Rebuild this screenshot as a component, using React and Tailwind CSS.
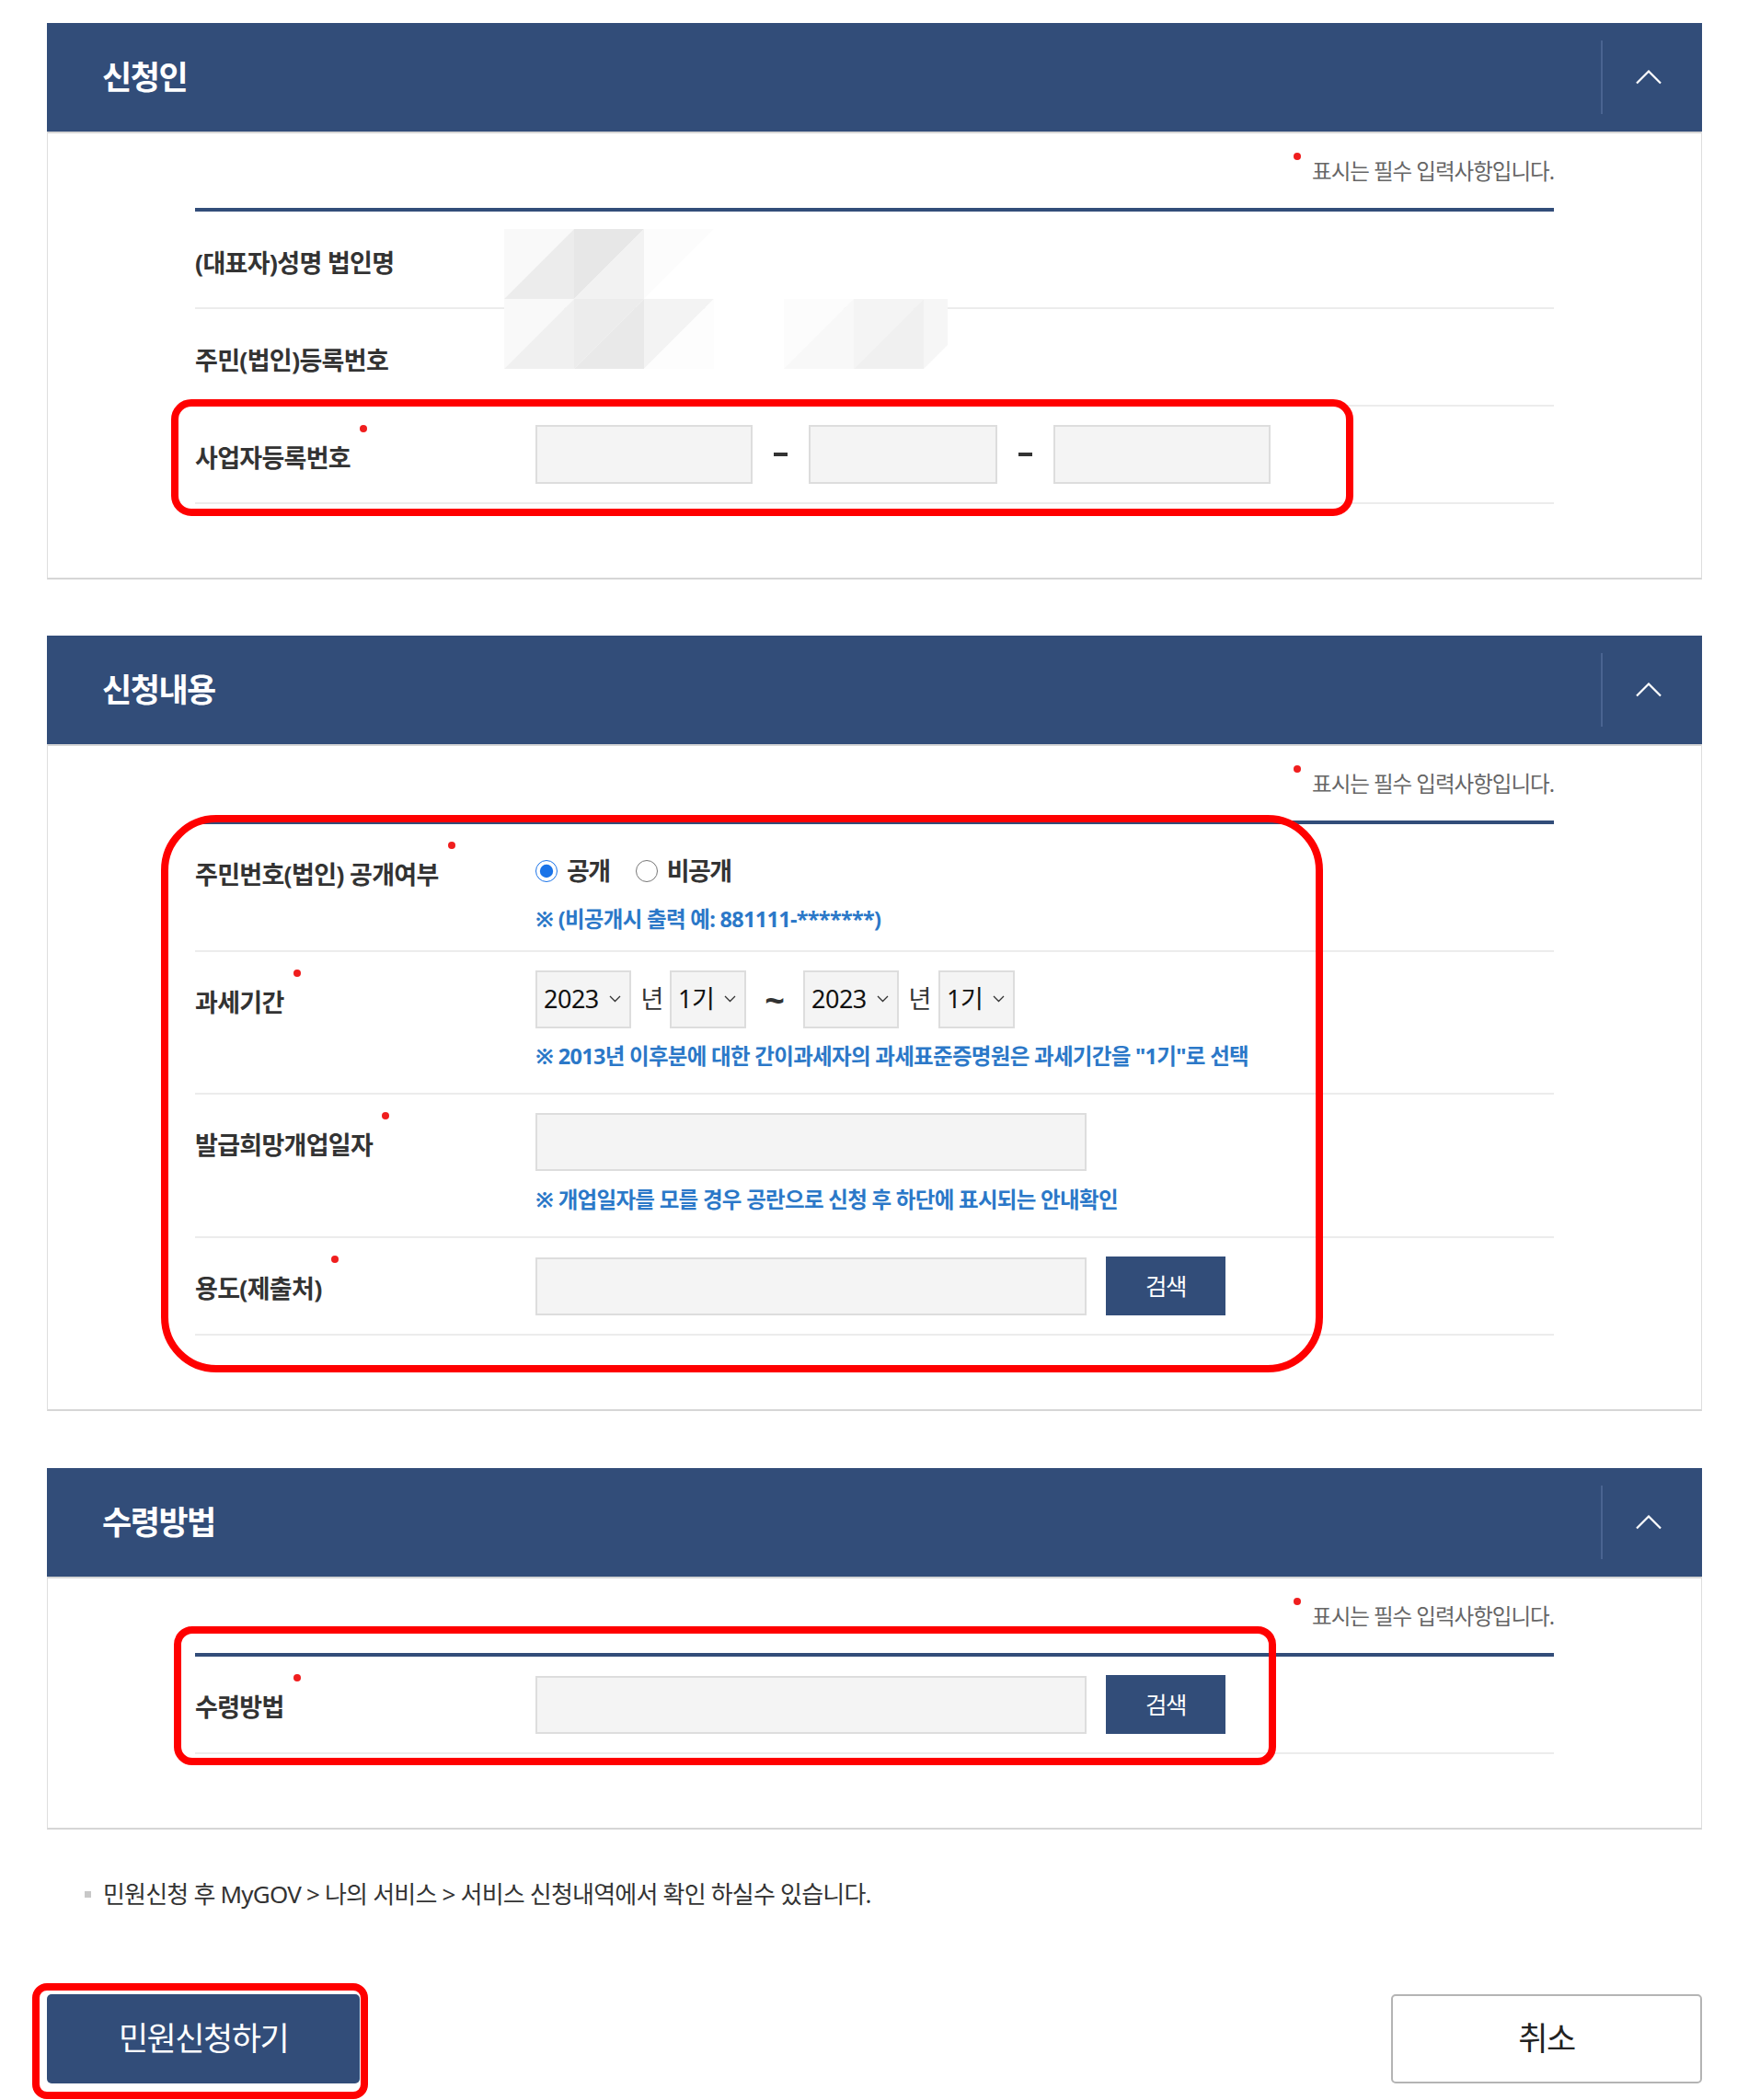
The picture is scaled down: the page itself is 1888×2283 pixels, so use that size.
import React from 'react'

const Dot = ({ className = '' }) => (
  <span className={`absolute h-[8px] w-[8px] rounded-full bg-[#f01e1e] ${className}`} />
)

const Header = ({ title }) => (
  <div className="flex h-[118px] items-center justify-between bg-[#324d79]">
    <h2 className="pl-[60px] text-[35px] font-bold tracking-[-1.5px] text-white">{title}</h2>
    <div className="flex h-full items-center">
      <div className="h-[80px] w-[2px] bg-[#4a6491]" />
      <div className="flex w-[108px] justify-center pr-[8px]">
        <svg width="28" height="16" viewBox="0 0 28 16">
          <polyline points="1,14.5 14,1.5 27,14.5" fill="none" stroke="white" strokeWidth="2.2" />
        </svg>
      </div>
    </div>
  </div>
)

const RequiredNote = () => (
  <div className="flex h-[81px] items-center justify-end">
    <span className="relative inline-block text-[23.5px] leading-[30px] tracking-[-1px] text-[#666]">
      <Dot className="left-[-20px] top-[-5px]" />
      표시는 필수 입력사항입니다.
    </span>
  </div>
)

const Section = ({ title, className = '', children }) => (
  <section className={className}>
    <Header title={title} />
    <div className="border-x border-t-2 border-b-2 border-x-[#dedede] border-t-[#d6d6d6] border-b-[#d6d6d6] px-[160px] pb-[80px]">
      <RequiredNote />
      <div className="h-[4px] bg-[#324d79]" />
      {children}
    </div>
  </section>
)

const Label = ({ text, req, tall }) => (
  <div className={`flex w-[370px] shrink-0 items-center ${tall ? 'h-[62px]' : ''}`}>
    <span className="relative inline-block translate-y-[4px] text-[27px] leading-[34px] font-bold tracking-[-0.7px] text-[#333]">
      {text}
      {req && <Dot className="left-[calc(100%+10px)] top-[-19px]" />}
    </span>
  </div>
)

const Help = ({ children, className = '' }) => (
  <p className={`text-[23.5px] leading-[30px] font-bold tracking-[-0.7px] text-[#2b78c8] ${className}`}>{children}</p>
)

const Select = ({ value, className = '' }) => (
  <div className={`flex h-[63px] items-center justify-between border-2 border-[#dddddd] bg-[#f4f4f4] pl-[7px] pr-[9px] ${className}`}>
    <span className="text-[27px] tracking-[-0.5px] text-[#111]">{value}</span>
    <svg width="13" height="8" viewBox="0 0 13 8">
      <polyline points="1,1 6.5,6.5 12,1" fill="none" stroke="#333" strokeWidth="1.3" />
    </svg>
  </div>
)

const SearchRow = () => (
  <div className="flex items-center">
    <input className="block h-[63px] w-[599px] border-2 border-[#dddddd] bg-[#f4f4f4]" />
    <button className="ml-[21px] h-[64px] w-[130px] bg-[#324d79] text-[25.5px] tracking-[-1.5px] text-white">검색</button>
  </div>
)

const Blob = () => (
  <svg className="absolute left-[548px] top-[249px]" width="482" height="152" viewBox="0 0 482 152">
    <polygon points="0,0 76,0 0,76" fill="#f9f9f9" />
    <polygon points="76,0 76,76 0,76" fill="#ececec" />
    <polygon points="76,0 152,0 76,76" fill="#e7e7e7" />
    <polygon points="152,0 152,76 76,76" fill="#f2f2f2" />
    <polygon points="152,0 228,0 152,76" fill="#fcfcfc" />
    <polygon points="228,0 228,76 152,76" fill="#ffffff" />
    <polygon points="0,76 76,76 0,152" fill="#f9f9f9" />
    <polygon points="76,76 76,152 0,152" fill="#f0f0f0" />
    <polygon points="76,76 152,76 76,152" fill="#ececec" />
    <polygon points="152,76 152,152 76,152" fill="#e9e9e9" />
    <polygon points="152,76 228,76 152,152" fill="#f3f3f3" />
    <polygon points="228,76 228,152 152,152" fill="#fdfdfd" />
    <rect x="228" y="76" width="76" height="76" fill="#ffffff" />
    <polygon points="304,76 380,76 304,152" fill="#fcfcfc" />
    <polygon points="380,76 380,152 304,152" fill="#f8f8f8" />
    <polygon points="380,76 456,76 380,152" fill="#f4f4f4" />
    <polygon points="456,76 456,152 380,152" fill="#f0f0f0" />
    <polygon points="456,76 482,76 482,126 456,152" fill="#f6f6f6" />
  </svg>
)

const Mark = ({ className }) => (
  <div className={`pointer-events-none absolute border-[8px] border-[#ff0000] ${className}`} />
)

export default function App() {
  return (
    <div className="relative min-h-[2283px] w-[1888px] bg-white pl-[51px] pt-[25px] font-['Noto_Sans','Noto_Sans_CJK_KR',sans-serif]">
      <div className="w-[1799px]">
        <Section title="신청인">
          <div className="flex h-[106px] items-center border-b-2 border-[#ececec]">
            <Label text="(대표자)성명 법인명" />
          </div>
          <div className="flex h-[106px] items-center border-b-2 border-[#ececec]">
            <Label text="주민(법인)등록번호" />
          </div>
          <div className="flex h-[106px] items-center border-b-2 border-[#ececec]">
            <Label text="사업자등록번호" req />
            <div className="flex items-center gap-[23px]">
              <input className="h-[64px] w-[236px] border-2 border-[#dddddd] bg-[#f4f4f4]" />
              <span className="h-[4px] w-[15px] bg-[#333]" />
              <input className="h-[64px] w-[205px] border-2 border-[#dddddd] bg-[#f4f4f4]" />
              <span className="h-[4px] w-[15px] bg-[#333]" />
              <input className="h-[64px] w-[236px] border-2 border-[#dddddd] bg-[#f4f4f4]" />
            </div>
          </div>
        </Section>

        <Section title="신청내용" className="mt-[61px]">
          <div className="flex border-b-2 border-[#ececec] pb-[19px] pt-[20px]">
            <Label text="주민번호(법인) 공개여부" req tall />
            <div>
              <div className="flex h-[62px] items-center">
                <label className="flex items-center gap-[10px]">
                  <input type="radio" name="open" defaultChecked className="m-0 h-[24px] w-[24px] accent-[#1a73e8]" />
                  <span className="text-[27px] font-bold tracking-[-1.5px] text-[#333]">공개</span>
                </label>
                <label className="ml-[28px] flex items-center gap-[10px]">
                  <input type="radio" name="open" className="m-0 h-[24px] w-[24px]" />
                  <span className="text-[27px] font-bold tracking-[-1.5px] text-[#333]">비공개</span>
                </label>
              </div>
              <Help className="mt-[6px]">※ (비공개시 출력 예: 881111-*******)</Help>
            </div>
          </div>

          <div className="flex border-b-2 border-[#ececec] pb-[25px] pt-[20px]">
            <Label text="과세기간" req tall />
            <div>
              <div className="flex h-[62px] items-center">
                <Select value="2023" className="w-[104px]" />
                <span className="ml-[10px] inline-block w-[25px] text-center text-[27px] tracking-[-1px] text-[#333]">년</span>
                <Select value="1기" className="ml-[7px] w-[83px]" />
                <span className="ml-[18px] inline-block w-[26px] text-center text-[38px] font-bold leading-none text-[#333]">~</span>
                <Select value="2023" className="ml-[18px] w-[104px]" />
                <span className="ml-[10px] inline-block w-[25px] text-center text-[27px] tracking-[-1px] text-[#333]">년</span>
                <Select value="1기" className="ml-[8px] w-[83px]" />
              </div>
              <Help className="mt-[16px]">※ 2013년 이후분에 대한 간이과세자의 과세표준증명원은 과세기간을 "1기"로 선택</Help>
            </div>
          </div>

          <div className="flex border-b-2 border-[#ececec] pb-[25px] pt-[20px]">
            <Label text="발급희망개업일자" req tall />
            <div>
              <input className="block h-[63px] w-[599px] border-2 border-[#dddddd] bg-[#f4f4f4]" />
              <Help className="mt-[16px]">※ 개업일자를 모를 경우 공란으로 신청 후 하단에 표시되는 안내확인</Help>
            </div>
          </div>

          <div className="flex border-b-2 border-[#ececec] pb-[20px] pt-[20px]">
            <Label text="용도(제출처)" req tall />
            <SearchRow />
          </div>
        </Section>

        <Section title="수령방법" className="mt-[62px]">
          <div className="flex border-b-2 border-[#ececec] pb-[20px] pt-[20px]">
            <Label text="수령방법" req tall />
            <SearchRow />
          </div>
        </Section>

        <p className="mt-[55px] flex items-center pl-[41px] text-[26px] leading-[30px] tracking-[-0.8px] text-[#333]">
          <span className="mr-[13px] h-[7px] w-[7px] bg-[#c8c8c8]" />
          민원신청 후 MyGOV {'>'} 나의 서비스 {'>'} 서비스 신청내역에서 확인 하실수 있습니다.
        </p>

        <div className="mt-[94px] flex justify-between">
          <button className="h-[97px] w-[340px] rounded-[5px] bg-[#324d79] text-[35px] tracking-[-1.5px] text-white">민원신청하기</button>
          <button className="h-[97px] w-[338px] rounded-[5px] border-2 border-[#b4b4b4] bg-white text-[35px] tracking-[-1.5px] text-[#222]">취소</button>
        </div>
      </div>

      <Blob />
      <Mark className="left-[186px] top-[434px] h-[127px] w-[1285px] rounded-[22px]" />
      <Mark className="left-[175px] top-[886px] h-[606px] w-[1263px] rounded-[60px]" />
      <Mark className="left-[189px] top-[1768px] h-[151px] w-[1198px] rounded-[20px]" />
      <Mark className="left-[35px] top-[2156px] h-[126px] w-[365px] rounded-[16px]" />
    </div>
  )
}
